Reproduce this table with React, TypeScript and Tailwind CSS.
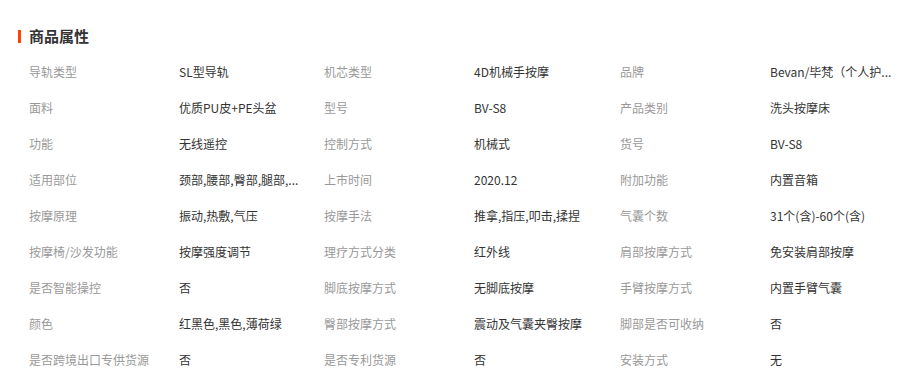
import React from "react";

const rows: [string, string, string, string, string, string][] = [
  ["导轨类型", "SL型导轨", "机芯类型", "4D机械手按摩", "品牌", "Bevan/毕梵（个人护..."],
  ["面料", "优质PU皮+PE头盆", "型号", "BV-S8", "产品类别", "洗头按摩床"],
  ["功能", "无线遥控", "控制方式", "机械式", "货号", "BV-S8"],
  ["适用部位", "颈部,腰部,臀部,腿部,...", "上市时间", "2020.12", "附加功能", "内置音箱"],
  ["按摩原理", "振动,热敷,气压", "按摩手法", "推拿,指压,叩击,揉捏", "气囊个数", "31个(含)-60个(含)"],
  ["按摩椅/沙发功能", "按摩强度调节", "理疗方式分类", "红外线", "肩部按摩方式", "免安装肩部按摩"],
  ["是否智能操控", "否", "脚底按摩方式", "无脚底按摩", "手臂按摩方式", "内置手臂气囊"],
  ["颜色", "红黑色,黑色,薄荷绿", "臀部按摩方式", "震动及气囊夹臀按摩", "脚部是否可收纳", "否"],
  ["是否跨境出口专供货源", "否", "是否专利货源", "否", "安装方式", "无"],
];

function Cell({ label, value }: { label: string; value: string }) {
  return (
    <div className="flex items-center h-[36px] pl-[11px]">
      <div className="w-[150px] shrink-0 text-[#999] whitespace-nowrap">{label}</div>
      <div className="text-[#333] whitespace-nowrap">{value}</div>
    </div>
  );
}

export default function App() {
  return (
    <div
      className="w-[910px] h-[379px] bg-white overflow-hidden pt-[26px] pl-[18px] text-[12px] leading-[16px]"
      style={{ fontFamily: '"Noto Sans CJK SC", "Microsoft YaHei", sans-serif' }}
    >
      <div className="flex items-center h-[20px]">
        <div className="w-[3px] h-[13px] bg-[#ff4400]" />
        <div className="ml-[8px] text-[15px] font-bold text-[#333] leading-[20px]">商品属性</div>
      </div>
      <div className="mt-[8px] grid grid-cols-[295px_296px_295px]">
        {rows.map((r, i) => (
          <React.Fragment key={i}>
            <Cell label={r[0]} value={r[1]} />
            <Cell label={r[2]} value={r[3]} />
            <Cell label={r[4]} value={r[5]} />
          </React.Fragment>
        ))}
      </div>
    </div>
  );
}
